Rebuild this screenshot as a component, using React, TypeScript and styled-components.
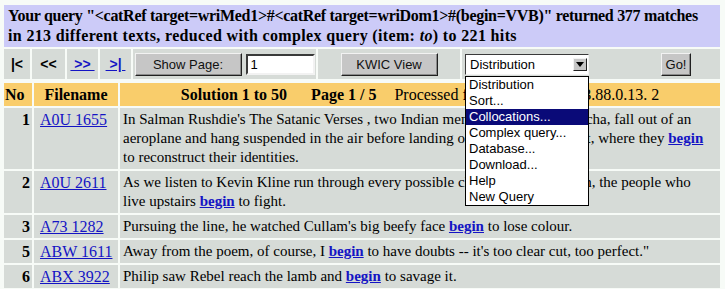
import React from 'react'
import styled, { createGlobalStyle } from 'styled-components'

const colors = {
  page: '#f7fbf7',
  banner: '#cccbf8',
  cell: '#d6dbd7',
  head: '#f9cd6b',
  link: '#1414c4',
  navy: '#0a0a78',
  button: '#c6c6c6',
}

interface Hit {
  no: number
  file: string
  before: string
  after: string
}

const hits: Hit[] = [
  {
    no: 1,
    file: 'A0U 1655',
    before:
      "In Salman Rushdie's The Satanic Verses , two Indian men, Gibreel and Chamcha, fall out of an aeroplane and hang suspended in the air before landing on the Yorkshire coast, where they",
    after: 'to reconstruct their identities.',
  },
  {
    no: 2,
    file: 'A0U 2611',
    before:
      'As we listen to Kevin Kline run through every possible cliché of a Frenchman, the people who live upstairs',
    after: 'to fight.',
  },
  { no: 3, file: 'A73 1282', before: "Pursuing the line, he watched Cullam's big beefy face", after: 'to lose colour.' },
  {
    no: 5,
    file: 'ABW 1611',
    before: 'Away from the poem, of course, I',
    after: 'to have doubts -- it\'s too clear cut, too perfect."',
  },
  { no: 6, file: 'ABX 3922', before: 'Philip saw Rebel reach the lamb and', after: 'to savage it.' },
]

const menu = [
  'Distribution',
  'Sort...',
  'Collocations...',
  'Complex query...',
  'Database...',
  'Download...',
  'Help',
  'New Query',
]

const GlobalStyle = createGlobalStyle`
  html, body {
    background: ${colors.page};
  }
  body {
    margin: 5px 5px 0 4px;
    font-family: "Liberation Serif", "Times New Roman", serif;
    color: #000;
  }
`

const App: React.FunctionComponent = () => {
  return (
    <>
      <GlobalStyle />
      <Page>
        <Banner>
          <BannerLine $spacing={-0.3}>
            Your query "&lt;catRef target=wriMed1&gt;#&lt;catRef target=wriDom1&gt;#(begin=VVB)" returned 377 matches
          </BannerLine>
          <BannerLine $spacing={0.35}>
            in 213 different texts, reduced with complex query (item: <i>to</i>) to 221 hits
          </BannerLine>
        </Banner>
        <Toolbar>
          <ToolCell $width={26}>
            <NavText>|&lt;</NavText>
          </ToolCell>
          <ToolCell $width={33}>
            <NavText>&lt;&lt;</NavText>
          </ToolCell>
          <ToolCell $width={31}>
            <NavLink href="#">&nbsp;&gt;&gt;&nbsp;</NavLink>
          </ToolCell>
          <ToolCell $width={31}>
            <NavLink href="#">&nbsp;&gt;|&nbsp;</NavLink>
          </ToolCell>
          <ToolCell $width={183}>
            <Button type="button" $width={107}>
              Show Page:
            </Button>
            <PageInput defaultValue="1" />
          </ToolCell>
          <ToolCell $width={142}>
            <Button type="button" $width={97}>
              KWIC View
            </Button>
          </ToolCell>
          <ActionCell>
            <SelectWrap>
              <SelectBox>
                Distribution
                <ArrowButton>
                  <svg width="8" height="5" viewBox="0 0 8 5">
                    <path d="M0 0 H8 L4 5 Z" fill="#000" />
                  </svg>
                </ArrowButton>
              </SelectBox>
              <Menu>
                {menu.map((item) => (
                  <MenuItem key={item} $active={item === 'Collocations...'}>
                    {item}
                  </MenuItem>
                ))}
              </Menu>
            </SelectWrap>
            <Button type="button" $width={30}>
              Go!
            </Button>
          </ActionCell>
        </Toolbar>
        <Results>
          <thead>
            <tr>
              <HeadCell $width={28} $align="left">
                No
              </HeadCell>
              <HeadCell $width={84}>Filename</HeadCell>
              <HeadCell>
                <HeadLine>
                  <span>Solution 1 to 50</span>
                  <HeadPart $gap={24}>Page 1 / 5</HeadPart>
                  <HeadPart $gap={18} $plain>
                    Processed from IP address 193.88.0.13. 2
                  </HeadPart>
                </HeadLine>
              </HeadCell>
            </tr>
          </thead>
          <tbody>
            {hits.map((hit) => (
              <tr key={hit.no}>
                <NumCell>{hit.no}</NumCell>
                <FileCell>
                  <FileLink href="#">{hit.file}</FileLink>
                </FileCell>
                <TextCell>
                  {hit.before} <KeyWord href="#">begin</KeyWord> {hit.after}
                </TextCell>
              </tr>
            ))}
          </tbody>
        </Results>
      </Page>
    </>
  )
}

export default App

const Page = styled.div`
  width: 716px;
`

const Banner = styled.div`
  background: ${colors.banner};
  padding: 1px 4px;
  font-weight: bold;
  font-size: 16px;
  line-height: 20px;
  white-space: nowrap;
`

const BannerLine = styled.div<{ $spacing: number }>`
  letter-spacing: ${(p) => p.$spacing}px;
`

const Toolbar = styled.div`
  display: flex;
  gap: 2px;
  height: 30px;
  margin-top: 2px;
`

const ToolCell = styled.div<{ $width: number }>`
  display: flex;
  align-items: center;
  justify-content: center;
  gap: 4px;
  width: ${(p) => p.$width}px;
  background: ${colors.cell};
`

const ActionCell = styled.div`
  flex: 1;
  display: flex;
  align-items: center;
  padding: 0 29px 0 3px;
  justify-content: space-between;
  background: ${colors.cell};
`

const NavText = styled.span`
  font-family: "Liberation Sans", Arial, sans-serif;
  font-weight: bold;
  font-size: 14px;
`

const NavLink = styled.a`
  font-family: "Liberation Sans", Arial, sans-serif;
  font-weight: bold;
  font-size: 14px;
  color: ${colors.link};
  text-decoration: underline;
`

const Button = styled.button<{ $width: number }>`
  width: ${(p) => p.$width}px;
  height: 23px;
  padding: 0;
  font-family: "Liberation Sans", Arial, sans-serif;
  font-size: 13px;
  color: #111;
  background: ${colors.button};
  border: 1px solid;
  border-color: #f2f2f2 #202020 #202020 #f2f2f2;
  box-shadow: inset -1px -1px 0 #8a8a8a;
`

const PageInput = styled.input`
  width: 69px;
  height: 21px;
  box-sizing: border-box;
  padding: 0 3px;
  font-family: "Liberation Sans", Arial, sans-serif;
  font-size: 13px;
  background: #fff;
  border: 2px solid;
  border-color: #3a3a3a #f2f2f2 #f2f2f2 #3a3a3a;
  outline: none;
`

const SelectWrap = styled.div`
  position: relative;
`

const SelectBox = styled.div`
  display: flex;
  align-items: center;
  width: 124px;
  height: 21px;
  box-sizing: border-box;
  padding: 0 1px 0 4px;
  font-family: "Liberation Sans", Arial, sans-serif;
  font-size: 13px;
  background: #fff;
  border: 1px solid;
  border-color: #3a3a3a #f2f2f2 #f2f2f2 #3a3a3a;
`

const ArrowButton = styled.span`
  display: flex;
  align-items: center;
  justify-content: center;
  margin-left: auto;
  width: 14px;
  height: 13px;
  box-sizing: border-box;
  background: ${colors.button};
  border: 1px solid;
  border-color: #f2f2f2 #202020 #202020 #f2f2f2;
`

const Menu = styled.ul`
  position: absolute;
  top: 22px;
  left: 0;
  z-index: 2;
  width: 124px;
  box-sizing: border-box;
  margin: 0;
  padding: 0;
  list-style: none;
  background: #fff;
  border: 1px solid #000;
`

const MenuItem = styled.li<{ $active?: boolean }>`
  height: 16px;
  line-height: 16px;
  padding-left: 3px;
  font-family: "Liberation Sans", Arial, sans-serif;
  font-size: 13px;
  color: ${(p) => (p.$active ? '#fff' : '#000')};
  background: ${(p) => (p.$active ? colors.navy : 'transparent')};
`

const Results = styled.table`
  table-layout: fixed;
  border-spacing: 2px;
  margin: 2px 0 0 -2px;
  width: 720px;
`

const HeadCell = styled.th<{ $width?: number; $align?: string }>`
  box-sizing: border-box;
  width: ${(p) => (p.$width ? `${p.$width}px` : 'auto')};
  height: 23px;
  padding: 0 1px;
  text-align: ${(p) => p.$align || 'center'};
  background: ${colors.head};
  font-size: 16px;
  font-weight: bold;
`

const HeadLine = styled.div`
  display: flex;
  justify-content: center;
  white-space: nowrap;
`

const HeadPart = styled.span<{ $gap: number; $plain?: boolean }>`
  margin-left: ${(p) => p.$gap}px;
  font-weight: ${(p) => (p.$plain ? 'normal' : 'bold')};
`

const NumCell = styled.td`
  padding: 2px 2px 2px 0;
  vertical-align: top;
  text-align: right;
  background: ${colors.cell};
  font-size: 16px;
  line-height: 19px;
  font-weight: bold;
`

const FileCell = styled.td`
  padding: 2px 0 2px 6px;
  vertical-align: top;
  white-space: nowrap;
  background: ${colors.cell};
  font-size: 16px;
  line-height: 19px;
`

const TextCell = styled.td`
  padding: 2px 3px;
  vertical-align: top;
  background: ${colors.cell};
  font-size: 15px;
  line-height: 19px;
`

const FileLink = styled.a`
  color: ${colors.link};
  text-decoration: underline;
`

const KeyWord = styled.a`
  color: ${colors.link};
  font-weight: bold;
  text-decoration: underline;
`
